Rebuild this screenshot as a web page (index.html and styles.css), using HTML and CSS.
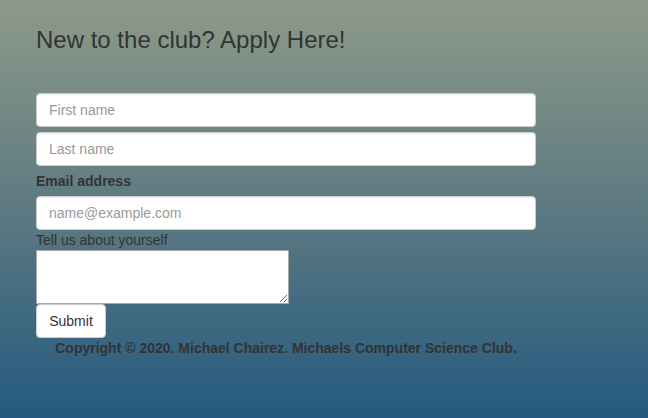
FILE: index.html
```html
<!DOCTYPE html>
<html>
<head>
<meta charset="utf-8">
<link rel="stylesheet" href="styles.css">
</head>
<body>
<main class="page">
  <h3 class="title">New to the club? Apply Here!</h3>
  <form class="apply">
    <input class="field" type="text" placeholder="First name">
    <input class="field" type="text" placeholder="Last name">
    <label class="label-bold">Email address</label>
    <input class="field" type="email" placeholder="name@example.com">
    <label class="label-plain">Tell us about yourself</label>
    <textarea class="about"></textarea>
    <button class="btn" type="button">Submit</button>
  </form>
  <p class="footer">Copyright © 2020. Michael Chairez. Michaels Computer Science Club.</p>
</main>
</body>
</html>
```
FILE: styles.css
```css
html, body {
  margin: 0;
  height: 100%;
}
body {
  background: linear-gradient(to bottom, #8d9a89 0%, #5d7a81 50%, #245a80 100%);
  font-family: "Liberation Sans", Arial, sans-serif;
  font-size: 14px;
  color: #333;
  line-height: 1.42857;
}
.page {
  width: 500px;
  padding: 27px 0 0 36px;
}
.title {
  margin: 0;
  font-size: 24px;
  font-weight: 400;
  line-height: 26.4px;
  color: #333;
}
.apply {
  display: flex;
  flex-direction: column;
  align-items: flex-start;
  margin-top: 40px;
}
.field {
  box-sizing: border-box;
  width: 500px;
  height: 34px;
  padding: 6px 12px;
  border: 1px solid #ccc;
  border-radius: 4px;
  background: #fff;
  font-family: inherit;
  font-size: 14px;
  color: #555;
  margin: 0 0 5px 0;
  box-shadow: inset 0 1px 1px rgba(0,0,0,.075);
}
.field::placeholder {
  color: #999;
}
.label-bold {
  font-weight: 700;
  line-height: 20px;
  margin: 0 0 5px 0;
}
.label-plain {
  line-height: 18px;
  margin: -4px 0 0 0;
}
.about {
  box-sizing: border-box;
  width: 253px;
  height: 54px;
  margin: 1px 0 0 0;
  border: 1px solid #a9a9a9;
  background: #fff;
  font-family: inherit;
  padding: 2px;
}
.btn {
  box-sizing: border-box;
  width: 70px;
  height: 34px;
  padding: 6px 12px;
  border: 1px solid #ccc;
  border-radius: 4px;
  background: #fff;
  font-family: inherit;
  font-size: 14px;
  color: #333;
  margin: 0;
}
.footer {
  margin: 0;
  font-weight: 700;
  text-align: center;
  line-height: 20px;
  color: #333;
}
```
